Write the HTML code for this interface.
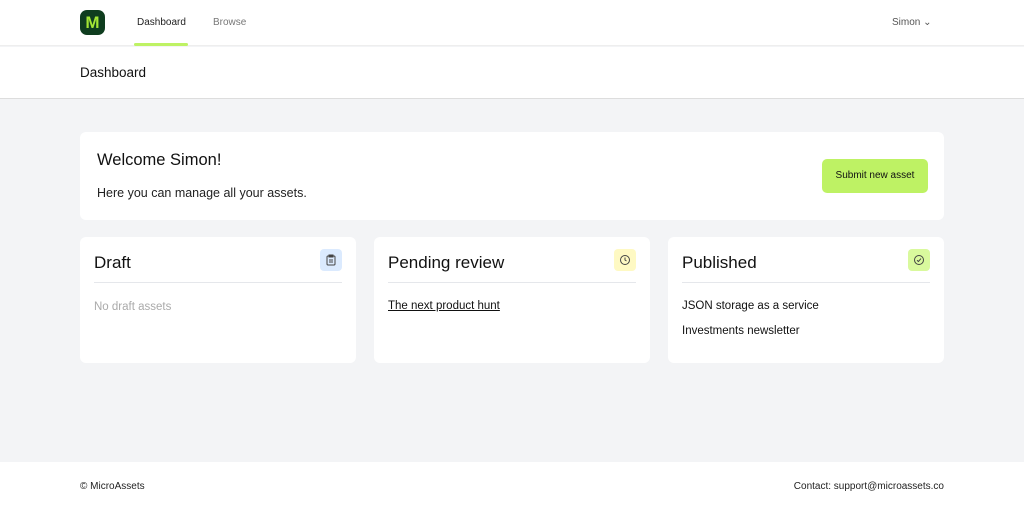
<!DOCTYPE html><html><head><style>
*{box-sizing:border-box;margin:0;padding:0}
body{width:1024px;height:511px;font-family:"Liberation Sans",sans-serif;background:#f3f4f6;color:#111;position:relative;overflow:hidden}
.abs{position:absolute}
.card{position:absolute;background:#fff;border-radius:6px}
.ttl{position:absolute;left:14px;top:16px;font-size:17px}
.hr{position:absolute;left:14px;right:14px;top:45px;border-top:1px solid #e5e7eb}
.ib{position:absolute;right:14px;top:12px;width:22px;height:22px;border-radius:4px;display:flex;align-items:center;justify-content:center}
.t{position:absolute;left:14px;font-size:11.5px}
</style></head><body>
<div class="abs" style="left:0;top:0;width:1024px;height:46px;background:#fff;border-bottom:1px solid #eee"></div>
<div class="abs" style="left:80px;top:10px;width:25px;height:25px;border-radius:7px;background:#0f3d1f;color:#a3e635;font-weight:bold;font-size:17px;text-align:center;line-height:25px">M</div>
<div class="abs" style="left:137px;top:17px;font-size:10px;color:#222">Dashboard</div>
<div class="abs" style="left:134px;top:43px;width:54px;height:3px;background:#bef264;border-radius:2px"></div>
<div class="abs" style="left:213px;top:17px;font-size:10px;color:#777">Browse</div>
<div class="abs" style="left:892px;top:17px;font-size:10px;color:#555">Simon &#8964;</div>
<div class="abs" style="left:0;top:47px;width:1024px;height:52px;background:#fff;border-bottom:1px solid #ddd"></div>
<div class="abs" style="left:80px;top:65px;font-size:13.5px">Dashboard</div>
<div class="card" style="left:80px;top:132px;width:864px;height:88px">
<div class="abs" style="left:17px;top:19px;font-size:16.5px">Welcome Simon!</div>
<div class="abs" style="left:17px;top:54px;font-size:12.5px;color:#222">Here you can manage all your assets.</div>
<div class="abs" style="left:742px;top:27px;width:106px;height:34px;background:#bef264;border-radius:5px;font-size:10px;text-align:center;line-height:34px">Submit new asset</div>
</div>
<div class="card" style="left:80px;top:237px;width:276px;height:126px">
<div class="ttl">Draft</div><div class="hr"></div>
<div class="ib" style="background:#dbeafe"><svg width="12" height="12" viewBox="0 0 12 12" fill="none" stroke="#444" stroke-width="1"><rect x="2" y="2" width="8" height="9" rx="1"/><rect x="4" y="1" width="4" height="2"/><path d="M4 6h4M4 8h4"/></svg></div>
<div class="t" style="top:62px;color:#aaa;line-height:14px;margin-top:1px">No draft assets</div></div>
<div class="card" style="left:374px;top:237px;width:276px;height:126px">
<div class="ttl">Pending review</div><div class="hr"></div>
<div class="ib" style="background:#fef9c3"><svg width="12" height="12" viewBox="0 0 12 12" fill="none" stroke="#444" stroke-width="1"><circle cx="6" cy="6" r="4.5"/><path d="M6 3.5V6l1.5 1"/></svg></div>
<div class="t" style="top:63px;text-decoration:underline">The next product hunt</div></div>
<div class="card" style="left:668px;top:237px;width:276px;height:126px">
<div class="ttl">Published</div><div class="hr"></div>
<div class="ib" style="background:#d9f99d"><svg width="12" height="12" viewBox="0 0 12 12" fill="none" stroke="#444" stroke-width="1"><circle cx="6" cy="6" r="4.5"/><path d="M4 6.2l1.4 1.3L8 4.6"/></svg></div>
<div class="t" style="top:63px">JSON storage as a service</div>
<div class="t" style="top:88px">Investments newsletter</div></div>
<div class="abs" style="left:0;top:462px;width:1024px;height:49px;background:#fff"></div>
<div class="abs" style="left:80px;top:481px;font-size:10px;color:#222">© MicroAssets</div>
<div class="abs" style="right:80px;top:481px;font-size:10px;color:#222">Contact: support@microassets.co</div>
</body></html>
